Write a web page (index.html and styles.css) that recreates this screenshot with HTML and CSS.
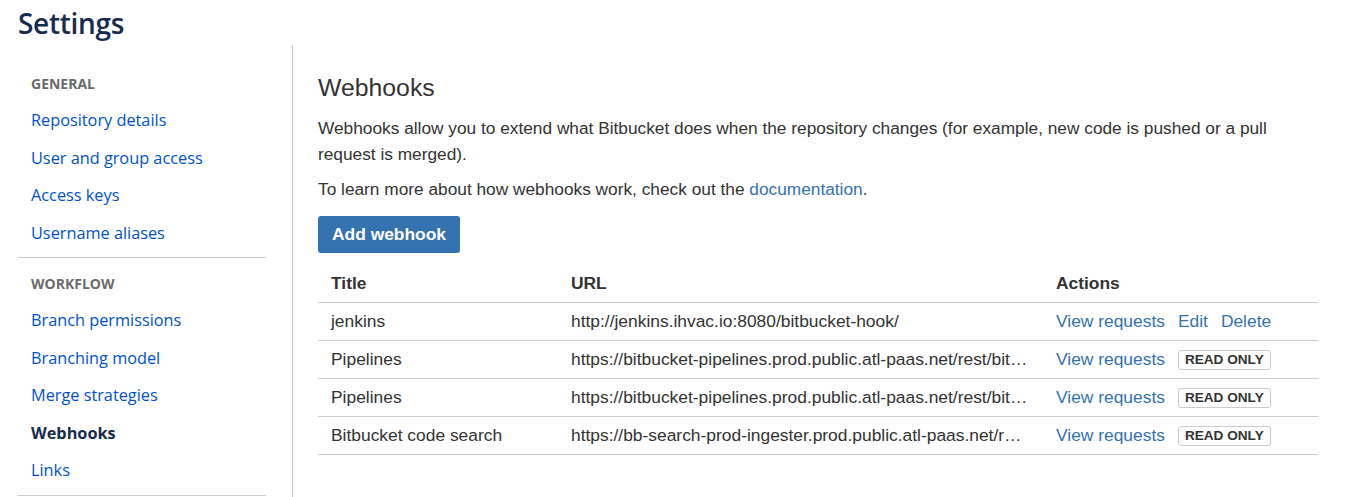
FILE: index.html
```html
<!DOCTYPE html>
<html>
<head>
<meta charset="utf-8">
<link rel="stylesheet" href="styles.css">
</head>
<body>
<header class="page-header"><h1 class="page-title">Settings</h1></header>
<div class="layout">
  <nav class="sidebar">
    <div class="nav-section">
      <div class="nav-heading">GENERAL</div>
      <a class="nav-item" href="#">Repository details</a>
      <a class="nav-item" href="#">User and group access</a>
      <a class="nav-item" href="#">Access keys</a>
      <a class="nav-item" href="#">Username aliases</a>
    </div>
    <div class="nav-section">
      <div class="nav-heading">WORKFLOW</div>
      <a class="nav-item" href="#">Branch permissions</a>
      <a class="nav-item" href="#">Branching model</a>
      <a class="nav-item" href="#">Merge strategies</a>
      <a class="nav-item active" href="#">Webhooks</a>
      <a class="nav-item" href="#">Links</a>
    </div>
  </nav>
  <main class="content">
    <h2 class="content-title">Webhooks</h2>
    <p class="text">Webhooks allow you to extend what Bitbucket does when the repository changes (for example, new code is pushed or a pull request is merged).</p>
    <p class="text">To learn more about how webhooks work, check out the <a class="link" href="#">documentation</a>.</p>
    <button class="btn-primary">Add webhook</button>
    <table class="hooks">
      <colgroup><col class="c-title"><col class="c-url"><col class="c-actions"></colgroup>
      <thead>
        <tr><th>Title</th><th>URL</th><th>Actions</th></tr>
      </thead>
      <tbody>
        <tr>
          <td>jenkins</td>
          <td class="url">http://jenkins.ihvac.io:8080/bitbucket-hook/</td>
          <td><div class="actions"><a class="link" href="#">View requests</a><a class="link" href="#">Edit</a><a class="link" href="#">Delete</a></div></td>
        </tr>
        <tr>
          <td>Pipelines</td>
          <td class="url"><span class="url-text">https://bitbucket-pipelines.prod.public.atl-paas.net/rest/bit…</span></td>
          <td><div class="actions"><a class="link" href="#">View requests</a><span class="badge">READ ONLY</span></div></td>
        </tr>
        <tr>
          <td>Pipelines</td>
          <td class="url"><span class="url-text">https://bitbucket-pipelines.prod.public.atl-paas.net/rest/bit…</span></td>
          <td><div class="actions"><a class="link" href="#">View requests</a><span class="badge">READ ONLY</span></div></td>
        </tr>
        <tr>
          <td>Bitbucket code search</td>
          <td class="url"><span class="url-text">https://bb-search-prod-ingester.prod.public.atl-paas.net/r…</span></td>
          <td><div class="actions"><a class="link" href="#">View requests</a><span class="badge">READ ONLY</span></div></td>
        </tr>
      </tbody>
    </table>
  </main>
</div>
</body>
</html>
```

FILE: styles.css
```css
html, body {
  margin: 0;
  padding: 0;
  background: #fff;
}
body {
  font-family: "Open Sans", "Noto Sans", sans-serif;
  height: 497px;
  overflow: hidden;
}
.page-header {
  height: 45px;
  padding-left: 18px;
  box-sizing: border-box;
}
.page-title {
  margin: 0;
  font-family: "Open Sans", sans-serif;
  font-size: 28px;
  font-weight: 600;
  color: #172b4d;
  line-height: 46px;
  letter-spacing: -0.3px;
}
.layout {
  display: flex;
  align-items: stretch;
  min-height: 460px;
}
.sidebar {
  margin-left: 18px;
  width: 275px;
  box-sizing: border-box;
  padding-right: 26px;
  padding-top: 13px;
  border-right: 1px solid #ccc;
  flex-shrink: 0;
}
.nav-section {
  padding: 8px 0 5px;
  border-bottom: 1px solid #ccc;
}
.nav-heading {
  height: 36px;
  line-height: 36px;
  padding-left: 13px;
  font-size: 14px;
  font-weight: 700;
  color: #6b6b6b;
}
.nav-item {
  display: block;
  height: 37.5px;
  line-height: 37.5px;
  padding-left: 13px;
  font-size: 16.3px;
  color: #0052cc;
  text-decoration: none;
  white-space: nowrap;
}
.nav-item.active {
  color: #172b4d;
  font-weight: 700;
}
.content {
  padding-left: 25px;
  width: 1000px;
  font-family: "Liberation Sans", Arial, sans-serif;
  color: #333;
}
.content-title {
  margin: 28px 0 0;
  font-size: 24.8px;
  font-weight: 400;
  line-height: 30px;
  color: #333;
}
.text {
  margin: 12px 0 0;
  max-width: 990px;
  font-size: 17.3px;
  line-height: 26px;
}
.text + .text {
  margin-top: 9px;
}
.link {
  color: #3572b0;
  text-decoration: none;
}
.btn-primary {
  display: block;
  margin-top: 14px;
  height: 37px;
  padding: 0 14px;
  background: #3572b0;
  border: none;
  border-radius: 3px;
  color: #fff;
  font-family: "Liberation Sans", Arial, sans-serif;
  font-size: 17.4px;
  font-weight: 700;
}
.hooks {
  margin-top: 12px;
  width: 1000px;
  border-collapse: collapse;
  table-layout: fixed;
  font-size: 17.4px;
}
.c-title { width: 240px; }
.c-url { width: 485px; }
.c-actions { width: 275px; }
.hooks th, .hooks td {
  height: 37px;
  padding: 0 13px;
  text-align: left;
  border-bottom: 1px solid #ccc;
  white-space: nowrap;
  color: #333;
}
.hooks th {
  font-weight: 700;
}
.hooks td.url {
  overflow: hidden;
}
.url-text {
  display: block;
  overflow: hidden;
}
.actions {
  display: flex;
  align-items: center;
  gap: 13px;
}
.badge {
  display: inline-block;
  border: 1px solid #ccc;
  border-radius: 3px;
  padding: 0 6px;
  height: 18px;
  line-height: 18px;
  font-size: 13.6px;
  font-weight: 700;
  color: #333;
}
```
